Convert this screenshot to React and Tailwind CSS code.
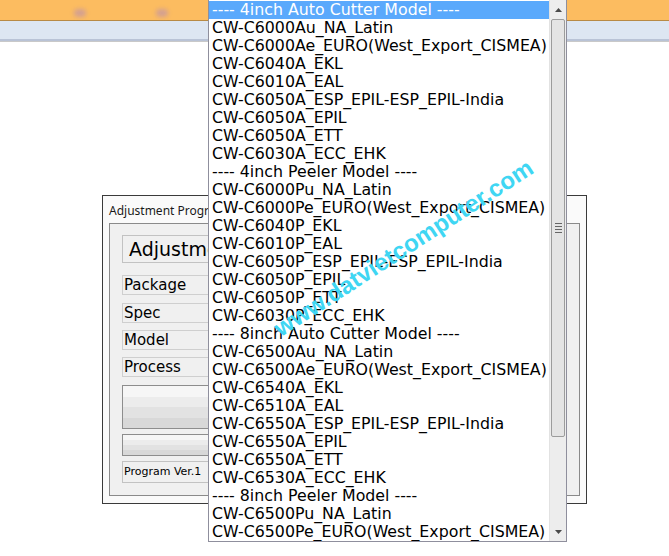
import React from 'react';

const items = [
  '---- 4inch Auto Cutter Model ----',
  'CW-C6000Au_NA_Latin',
  'CW-C6000Ae_EURO(West_Export_CISMEA)',
  'CW-C6040A_EKL',
  'CW-C6010A_EAL',
  'CW-C6050A_ESP_EPIL-ESP_EPIL-India',
  'CW-C6050A_EPIL',
  'CW-C6050A_ETT',
  'CW-C6030A_ECC_EHK',
  '---- 4inch Peeler Model ----',
  'CW-C6000Pu_NA_Latin',
  'CW-C6000Pe_EURO(West_Export_CISMEA)',
  'CW-C6040P_EKL',
  'CW-C6010P_EAL',
  'CW-C6050P_ESP_EPIL-ESP_EPIL-India',
  'CW-C6050P_EPIL',
  'CW-C6050P_ETT',
  'CW-C6030P_ECC_EHK',
  '---- 8inch Auto Cutter Model ----',
  'CW-C6500Au_NA_Latin',
  'CW-C6500Ae_EURO(West_Export_CISMEA)',
  'CW-C6540A_EKL',
  'CW-C6510A_EAL',
  'CW-C6550A_ESP_EPIL-ESP_EPIL-India',
  'CW-C6550A_EPIL',
  'CW-C6550A_ETT',
  'CW-C6530A_ECC_EHK',
  '---- 8inch Peeler Model ----',
  'CW-C6500Pu_NA_Latin',
  'CW-C6500Pe_EURO(West_Export_CISMEA)',
];

const font = { fontFamily: '"DejaVu Sans", Verdana, sans-serif' };

function LabelBox({ children, className = '' }) {
  return (
    <div className={`w-[90px] border border-[#cfcfcf] bg-[#f0f0f0] pl-[1px] text-[15px] leading-[18px] text-black ${className}`}>
      {children}
    </div>
  );
}

// flat stand-in for the old XP style gradient button
function GrayButton({ className = '' }) {
  return (
    <div className={`flex w-[200px] flex-col border border-[#8d8d8d] ${className}`}>
      <div className="flex-1 bg-[#f6f6f6]" />
      <div className="flex-1 bg-[#ececec]" />
      <div className="flex-1 bg-[#e2e2e2]" />
      <div className="flex-1 bg-[#d8d8d8]" />
    </div>
  );
}

export default function App() {
  return (
    <div className="relative h-[556px] w-[669px] overflow-hidden bg-white" style={font}>
      {/* title strip */}
      <div className="flex h-[21px] w-full items-end gap-[70px] border-b border-[#b88a45] bg-[#fcbc60] pb-[3px] pl-[74px]">
        <div className="h-[8px] w-[12px] rounded-full bg-[#d4a090] blur-[2px]" />
        <div className="h-[8px] w-[12px] rounded-full bg-[#d4a090] blur-[2px]" />
      </div>
      {/* toolbar strip */}
      <div className="h-[20px] border-b-2 border-[#b9c3d6] bg-[#dde6f2]" />
      <div className="h-px bg-[#c9c9c9]" />

      {/* dialog */}
      <div className="ml-[102px] mt-[153px] h-[309px] w-[485px] border border-[#3a3a3a] bg-[#fafafa] px-[6px] pt-[7px]">
        <div className="text-[12px] leading-[16px] text-[#1a1a1a]" style={{ fontFamily: '"Noto Sans", "Open Sans", sans-serif' }}>
          Adjustment Program
        </div>
        <div className="mt-[4px] h-[273px] w-[471px] border border-[#8a8a8a] bg-[#f0f0f0] pl-[12px] pt-[11px]">
          <div className="flex h-[28px] w-[100px] items-center border border-[#c2c2c2] pl-[6px] text-[19px] font-medium text-black">
            Adjustment
          </div>
          <LabelBox className="mt-[12px] h-[20px]">Package</LabelBox>
          <LabelBox className="mt-[8px] h-[20px]">Spec</LabelBox>
          <LabelBox className="mt-[7px] h-[20px]">Model</LabelBox>
          <LabelBox className="mt-[7px] h-[20px]">Process</LabelBox>
          <GrayButton className="mt-[8px] h-[44px]" />
          <GrayButton className="mt-[5px] h-[22px]" />
          <div className="mt-[5px] flex h-[22px] w-[100px] items-center border border-[#c2c2c2] pl-[1px] text-[11px] text-black">
            Program Ver.1
          </div>
        </div>
      </div>

      {/* dropdown list */}
      <div className="absolute left-[208px] top-0 flex h-[542px] w-[359px] border border-t-0 border-[#8f8f9d] bg-white">
        <div className="flex-1 overflow-hidden pt-px">
          {items.map((it, i) => (
            <div
              key={i}
              className={`h-[18px] whitespace-nowrap pl-[3px] text-[15.8px] leading-[18px] ${i === 0 ? 'bg-[#5aa9fc] text-white' : 'text-black'}`}
            >
              {it}
            </div>
          ))}
        </div>
        <div className="flex w-[17px] flex-col border-l border-[#e2e2e2] bg-[#ededed]">
          <div className="flex h-[19px] items-center justify-center">
            <svg width="7" height="4" viewBox="0 0 7 4"><path d="M0 4 L3.5 0 L7 4 Z" fill="#4a4a4a" /></svg>
          </div>
          <div className="mx-auto flex h-[418px] w-[14px] items-center justify-center rounded-[2px] border border-[#9c9c9c] bg-[#e4e4e4]">
            <div className="flex flex-col gap-[2px]">
              <div className="h-px w-[7px] bg-[#666]" />
              <div className="h-px w-[7px] bg-[#666]" />
              <div className="h-px w-[7px] bg-[#666]" />
              <div className="h-px w-[7px] bg-[#666]" />
            </div>
          </div>
          <div className="flex-1" />
          <div className="flex h-[19px] items-center justify-center">
            <svg width="7" height="4" viewBox="0 0 7 4"><path d="M0 0 L3.5 4 L7 0 Z" fill="#4a4a4a" /></svg>
          </div>
        </div>
      </div>

      {/* watermark */}
      <div
        className="pointer-events-none absolute left-[252px] top-[230px] origin-center -rotate-[33deg] whitespace-nowrap text-[24px] font-bold text-[#3fd6f3]"
        style={{ fontFamily: '"Liberation Sans", Arial, sans-serif' }}
      >
        www.datvietcomputer.com
      </div>
    </div>
  );
}
